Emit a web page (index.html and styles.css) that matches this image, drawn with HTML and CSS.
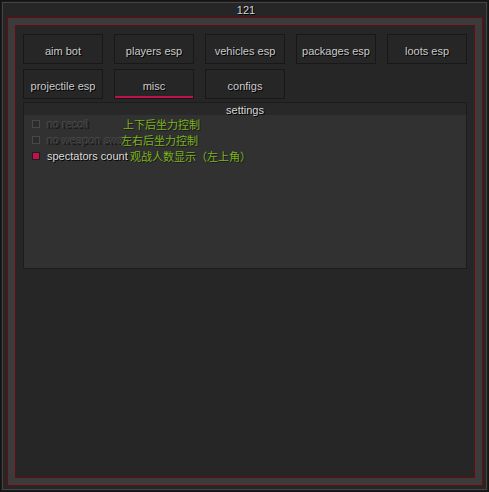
FILE: index.html
```html
<!DOCTYPE html>
<html>
<head>
<meta charset="utf-8">
<link rel="stylesheet" href="styles.css">
</head>
<body>
<div class="window">
  <div class="titlebar">121</div>
  <div class="frame-outer">
    <div class="frame-inner">
      <div class="tabs">
        <div class="tab">aim bot</div>
        <div class="tab">players esp</div>
        <div class="tab">vehicles esp</div>
        <div class="tab">packages esp</div>
        <div class="tab">loots esp</div>
        <div class="tab">projectile esp</div>
        <div class="tab active">misc</div>
        <div class="tab">configs</div>
      </div>
      <div class="panel">
        <div class="panel-head">settings</div>
        <div class="panel-body">
          <div class="row">
            <span class="box"></span><span class="label off">no recoil</span>
            <span class="zh zh1">上下后坐力控制</span>
          </div>
          <div class="row">
            <span class="box"></span><span class="label off">no weapon sway</span>
            <span class="zh zh2">左右后坐力控制</span>
          </div>
          <div class="row">
            <span class="box on"></span><span class="label">spectators count</span>
            <span class="zh zh3">观战人数显示（左上角）</span>
          </div>
        </div>
      </div>
    </div>
  </div>
</div>
</body>
</html>
```
FILE: styles.css
```css
* { box-sizing: border-box; }
html, body { margin: 0; padding: 0; background: #262626; }
body {
  font-family: "Liberation Sans", Arial, sans-serif;
  font-size: 11px;
  color: #cfcfcf;
}
.window {
  width: 489px;
  height: 492px;
  border: 1px solid #141414;
  box-shadow: inset 0 0 0 1px #1c1c1c, inset 0 0 0 2px #444444;
  background: #262626;
  padding: 1px 5px 5px 6px;
  display: flex;
  flex-direction: column;
}
.titlebar {
  height: 15px;
  flex: none;
  line-height: 16px;
  text-align: center;
  color: #d2d2d2;
  text-shadow: 1px 1px 0 #000;
  padding-left: 2px;
}
.frame-outer {
  flex: none;
  width: 476px;
  height: 469px;
  border: 1px solid #6a0a0e;
  background: #3b3b3b;
  padding: 7px;
}
.frame-inner {
  width: 460px;
  height: 453px;
  border: 1px solid #6a0a0e;
  background: #262626;
  padding: 8px 7px 7px 7px;
}
.tabs {
  display: grid;
  grid-template-columns: repeat(5, 80px);
  column-gap: 11px;
  row-gap: 5px;
}
.tab {
  height: 30px;
  border: 1px solid #181818;
  background: #262626;
  display: flex;
  align-items: center;
  justify-content: center;
  padding-top: 3px;
  color: #cacaca;
  text-shadow: 1px 1px 0 #000;
}
.tab.active {
  box-shadow: inset 0 -2px 0 #c0104a;
}
.panel {
  margin-top: 3px;
  width: 444px;
  height: 167px;
  border: 1px solid #1c1c1c;
  background: #313131;
}
.panel-head {
  height: 12px;
  background: #282828;
  text-align: center;
  line-height: 14px;
  color: #d8d8d8;
  text-shadow: 1px 1px 0 #000;
}
.panel-body {
  padding: 5px 0 0 8px;
  display: flex;
  flex-direction: column;
  gap: 8px;
}
.row {
  position: relative;
  height: 8px;
  display: flex;
  align-items: center;
}
.box {
  width: 8px;
  height: 8px;
  border: 1px solid #484848;
  background: #2c2c2c;
  flex: none;
}
.box.on {
  border-color: #1e1e1e;
  background: #c3104b;
}
.label {
  margin-left: 7px;
  white-space: nowrap;
  color: #dcdcdc;
  text-shadow: 1px 1px 0 #000;
  line-height: 12px;
}
.label.off {
  color: #2a2a2a;
  text-shadow: -1px 0 0 #4e4e4e, 0 -1px 0 #4e4e4e, 1px 1px 0 #111111;
}
.zh {
  position: absolute;
  top: -3px;
  white-space: nowrap;
  font-family: "Noto Sans CJK SC", "Liberation Sans", sans-serif;
  font-size: 11px;
  line-height: 14px;
  color: #7cb41a;
  text-shadow: 1px 1px 0 #1a1a1a;
}
.zh1 { left: 91px; }
.zh2 { left: 89px; }
.zh3 { left: 98px; }
```
